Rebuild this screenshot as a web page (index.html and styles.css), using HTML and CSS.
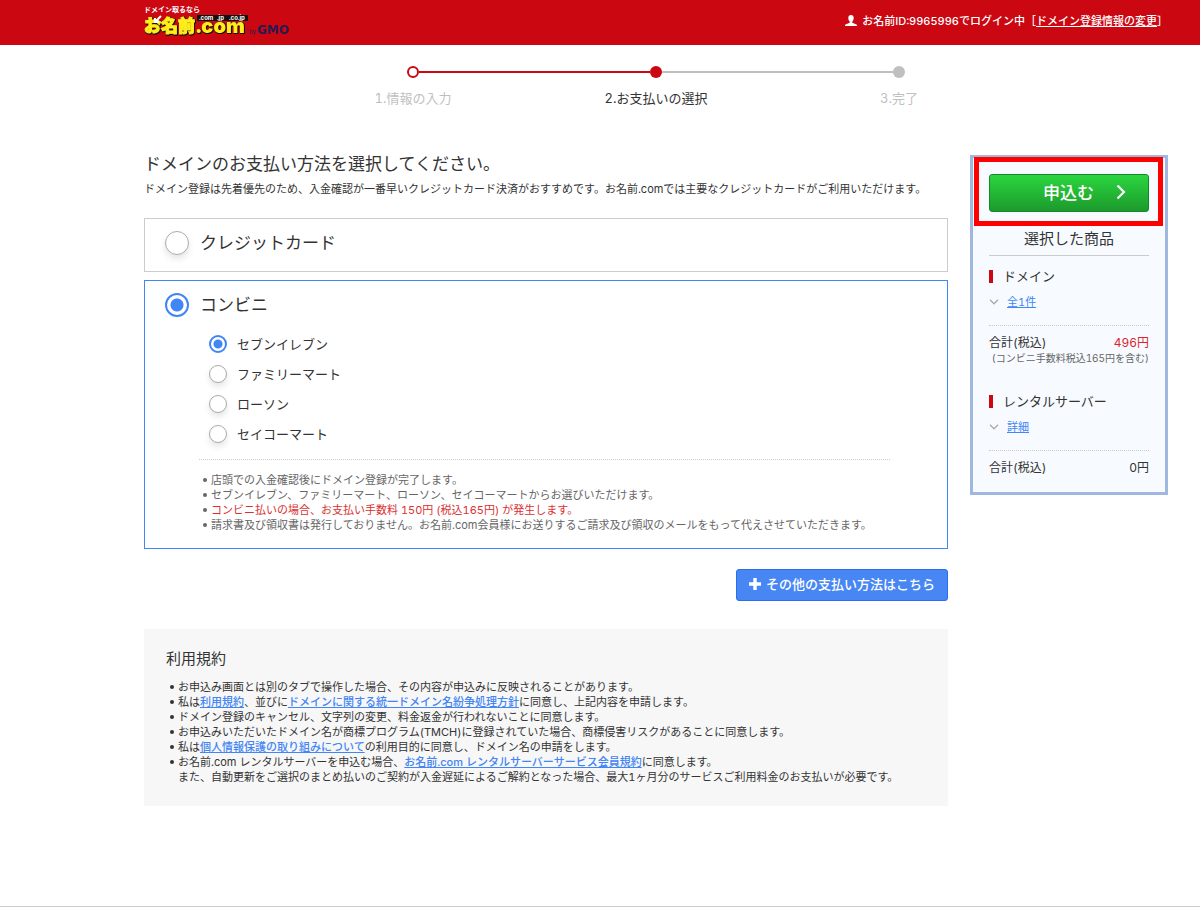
FILE: index.html
```html
<!DOCTYPE html>
<html lang="ja">
<head>
<meta charset="utf-8">
<meta name="viewport" content="width=device-width, initial-scale=1">
<title>お支払いの選択 | お名前.com</title>
<link rel="stylesheet" href="styles.css">
</head>
<body>
<header class="site-header">
  <svg class="logo" width="150" height="32" viewBox="0 0 150 32" role="img" aria-label="お名前.com by GMO">
    <text class="logo-tag" x="0" y="7">ドメイン取るなら</text>
    <rect x="53" y="10" width="51" height="6" fill="#111"/>
    <text class="logo-tld" x="55" y="15">.com</text>
    <text class="logo-tld" x="73" y="15">.jp</text>
    <text class="logo-tld" x="85" y="15">.co.jp</text>
    <text class="logo-name" x="0" y="27">お名前</text>
    <text class="logo-com" x="52" y="28">.com</text>
    <path d="M17 11l-5 5M11 13v4h4" fill="none" stroke="#fff" stroke-width="2"/>
    <text class="logo-by" x="105" y="29">by</text>
    <text class="logo-gmo" x="113" y="29">GMO</text>
  </svg>
  <p class="account">
    <svg width="12" height="12" viewBox="0 0 12 12" aria-hidden="true"><path d="M6 0C4.200 0 3.300 1.300 3.300 3.100c0 1.400.5 2.700 1.400 3.400v1.300L1 9.300C.4 9.600 0 10 0 11h12c0-1-.4-1.400-1-1.700L7.300 7.800V6.500c.9-.7 1.400-2 1.400-3.400C8.700 1.300 7.800 0 6 0z" fill="#fff"/></svg>
    <span>お名前ID:9965996でログイン中［<a href="#">ドメイン登録情報の変更</a>］</span>
  </p>
</header>

<div class="page">
  <ol class="steps">
    <li class="step step-done"><span class="mark"><span class="dot"></span></span>1.情報の入力</li>
    <li class="step step-current" aria-current="step"><span class="mark"><span class="dot"></span></span>2.お支払いの選択</li>
    <li class="step"><span class="mark"><span class="dot"></span></span>3.完了</li>
  </ol>

  <div class="columns">
    <main class="main">
      <h1 class="title">ドメインのお支払い方法を選択してください。</h1>
      <p class="intro">ドメイン登録は先着優先のため、入金確認が一番早いクレジットカード決済がおすすめです。お名前.comでは主要なクレジットカードがご利用いただけます。</p>

      <section class="card">
        <label class="method"><input class="radio radio-large" type="radio" name="method">クレジットカード</label>
      </section>

      <section class="card card-selected">
        <label class="method"><input class="radio radio-large" type="radio" name="method" checked>コンビニ</label>
        <div class="stores">
          <label class="store"><input class="radio" type="radio" name="store" checked>セブンイレブン</label>
          <label class="store"><input class="radio" type="radio" name="store">ファミリーマート</label>
          <label class="store"><input class="radio" type="radio" name="store">ローソン</label>
          <label class="store"><input class="radio" type="radio" name="store">セイコーマート</label>
        </div>
        <ul class="list notes">
          <li>店頭での入金確認後にドメイン登録が完了します。</li>
          <li>セブンイレブン、ファミリーマート、ローソン、セイコーマートからお選びいただけます。</li>
          <li><span class="alert">コンビニ払いの場合、お支払い手数料 150円 (税込165円) が発生します。</span></li>
          <li>請求書及び領収書は発行しておりません。お名前.com会員様にお送りするご請求及び領収のメールをもって代えさせていただきます。</li>
        </ul>
      </section>

      <div class="more">
        <button class="more-button" type="button">
          <svg width="12" height="12" viewBox="0 0 12 12" aria-hidden="true"><path d="M4.300 0h3.400v4.300H12v3.400H7.700V12H4.300V7.700H0V4.300h4.300z" fill="#fff"/></svg>
          その他の支払い方法はこちら
        </button>
      </div>

      <section class="terms">
        <h2 class="terms-title">利用規約</h2>
        <ul class="list">
          <li>お申込み画面とは別のタブで操作した場合、その内容が申込みに反映されることがあります。</li>
          <li>私は<a href="#">利用規約</a>、並びに<a href="#">ドメインに関する統一ドメイン名紛争処理方針</a>に同意し、上記内容を申請します。</li>
          <li>ドメイン登録のキャンセル、文字列の変更、料金返金が行われないことに同意します。</li>
          <li>お申込みいただいたドメイン名が商標プログラム(TMCH)に登録されていた場合、商標侵害リスクがあることに同意します。</li>
          <li>私は<a href="#">個人情報保護の取り組みについて</a>の利用目的に同意し、ドメイン名の申請をします。</li>
          <li>お名前.com レンタルサーバーを申込む場合、<a href="#">お名前.com レンタルサーバーサービス会員規約</a>に同意します。<br>また、自動更新をご選択のまとめ払いのご契約が入金遅延によるご解約となった場合、最大1ヶ月分のサービスご利用料金のお支払いが必要です。</li>
        </ul>
      </section>
    </main>

    <aside class="summary">
      <button class="apply" type="submit">
        申込む
        <svg width="10" height="16" viewBox="0 0 10 16" aria-hidden="true"><path d="M1.500 1.500L8 8l-6.500 6.500" fill="none" stroke="#fff" stroke-width="2.200"/></svg>
      </button>
      <div class="highlight"></div>
      <h2 class="summary-title">選択した商品</h2>

      <section class="product">
        <h3 class="product-name">ドメイン</h3>
        <p class="detail">
          <svg width="10" height="6" viewBox="0 0 10 6" aria-hidden="true"><path d="M1 .8l4 4 4-4" fill="none" stroke="#aaa" stroke-width="1.300"/></svg>
          <a href="#">全1件</a>
        </p>
        <div class="total"><span>合計(税込)</span><span class="price">496円</span></div>
        <p class="fee">(コンビニ手数料税込165円を含む)</p>
      </section>

      <section class="product product-next">
        <h3 class="product-name">レンタルサーバー</h3>
        <p class="detail">
          <svg width="10" height="6" viewBox="0 0 10 6" aria-hidden="true"><path d="M1 .8l4 4 4-4" fill="none" stroke="#aaa" stroke-width="1.300"/></svg>
          <a href="#">詳細</a>
        </p>
        <div class="total"><span>合計(税込)</span><span>0円</span></div>
      </section>
    </aside>
  </div>
</div>
<footer class="site-footer"></footer>
</body>
</html>
```
FILE: styles.css
```css
* { box-sizing: border-box; }

body, h1, h2, h3, p, ul, ol { margin: 0; padding: 0; }

body {
  background: #fff;
  color: #333;
  font-family: Inter, "Noto Sans CJK JP", sans-serif;
  font-size: 11px;
  font-variant-numeric: tabular-nums;
  line-height: 16px;
}

h1, h2, h3 { font-weight: 400; }
ul, ol { list-style: none; }
a { color: #4285f4; }
button { font-family: inherit; cursor: pointer; }
svg { flex: none; }

/* Header */
.site-header {
  display: flex;
  justify-content: space-between;
  align-items: flex-start;
  padding: 5px 32px 8px 144px;
  background: #cb0712;
}

.logo { display: block; overflow: visible; }
.logo-tag { font-size: 7px; font-weight: 700; fill: #fff; }
.logo-tld { font-size: 6px; font-weight: 700; fill: #fff; }
.logo-name,
.logo-com {
  fill: #ffee1c;
  font-weight: 900;
  filter: drop-shadow(1px 0 0 #1a1208) drop-shadow(0 1px 0 #1a1208);
}
.logo-name { font-size: 17px; stroke: #ffee1c; stroke-width: 1px; }
.logo-com { font-size: 20px; }
.logo-by { font-size: 6px; fill: #2c1a50; }
.logo-gmo { font-family: "DejaVu Sans", sans-serif; font-size: 12px; font-weight: 700; fill: #2c1a50; }

.account {
  display: flex;
  align-items: center;
  gap: 5px;
  margin-top: 8px;
  color: #fff;
  font-weight: 500;
}
.account a { color: #fff; }

.page { padding: 0 32px 0 144px; }

/* Progress */
.steps {
  display: grid;
  grid-template-columns: repeat(3, 1fr);
  max-width: 729px;
  margin: 21px auto 0;
}
.step {
  color: #bfbfbf;
  font-size: 13px;
  line-height: 20px;
  text-align: center;
}
.mark { display: flex; align-items: center; margin-bottom: 10px; }
.mark::before,
.mark::after { content: ""; flex: 1; height: 2px; background: #bfbfbf; }
.step:first-child .mark::before,
.step:last-child .mark::after { background: none; }
.dot { width: 12px; height: 12px; border-radius: 50%; background: #bfbfbf; }
.step-done .mark::after,
.step-current .mark::before,
.step-current .dot { background: #cb0712; }
.step-done .dot { background: #fff; border: 2px solid #cb0712; }
.step-current { color: #333; }

.columns {
  display: flex;
  align-items: flex-start;
  gap: 22px;
  margin-top: 44px;
}

/* Payment methods */
.main { flex: 1; min-width: 0; }
.title { font-size: 17px; line-height: 24px; }
.intro { margin: 5px 0 21px; }

.card { border: 1px solid #ccc; padding: 12px 20px 16px; }
.card + .card { margin-top: 8px; }
.card-selected { border-color: #4285f4; padding-bottom: 15px; }

.method {
  display: flex;
  align-items: center;
  gap: 11px;
  font-size: 17px;
  line-height: 24px;
}
.radio {
  appearance: none;
  flex: none;
  width: 18px;
  height: 18px;
  margin: 0;
  border: 1px solid #aaa;
  border-radius: 50%;
  background: #fff;
  box-shadow: 0 4px 6px rgba(0, 0, 0, 0.1);
}
.radio-large { width: 24px; height: 24px; }
.radio:checked {
  border: 2px solid #4285f4;
  background: radial-gradient(circle, #4285f4 4px, #fff 5px);
  box-shadow: none;
}
.radio-large:checked { background: radial-gradient(circle, #4285f4 6px, #fff 7px); }

.stores { margin-top: 12px; padding-left: 44px; }
.store {
  display: flex;
  align-items: center;
  gap: 10px;
  font-size: 13px;
  line-height: 30px;
}

.list { line-height: 15px; }
.list li { position: relative; padding-left: 12px; }
.list li::before {
  content: "";
  position: absolute;
  left: 4px;
  top: 5px;
  width: 4px;
  height: 4px;
  border-radius: 50%;
  background: currentColor;
}
.notes {
  margin: 10px 37px 0 34px;
  padding-top: 13px;
  border-top: 1px dotted #ccc;
  color: #666;
}
.alert { color: #dc3030; }

.more { display: flex; justify-content: flex-end; margin-top: 20px; }
.more-button {
  display: flex;
  align-items: center;
  gap: 5px;
  height: 32px;
  padding: 0 12px 3px;
  border: 1px solid #2a6df0;
  border-radius: 3px;
  background: #4887f3;
  color: #fff;
  font-size: 13px;
  font-weight: 500;
}

.terms { margin-top: 28px; padding: 20px 22px 21px; background: #f7f7f7; }
.terms-title { margin-bottom: 11px; font-size: 15px; line-height: 20px; }
.terms a { font-weight: 500; }

/* Order summary */
.summary {
  position: relative;
  flex: none;
  width: 198px;
  margin-top: 3px;
  padding: 16px 16px 16px;
  border: 3px solid #a0b8e0;
  background: #f7fbff;
}
.highlight {
  position: absolute;
  top: -1px;
  left: 1px;
  right: 2px;
  height: 69px;
  border: 5px solid #fe0000;
  pointer-events: none;
}
.apply {
  display: flex;
  align-items: center;
  justify-content: flex-end;
  gap: 22px;
  width: 100%;
  height: 38px;
  padding: 0 22px 3px;
  border: 1px solid #15892a;
  border-radius: 3px;
  background: linear-gradient(#2bd63f, #1c9a2c);
  color: #fff;
  font-size: 17px;
  font-weight: 500;
}
.summary-title {
  margin-top: 16px;
  padding-bottom: 5px;
  border-bottom: 1px solid #ccc;
  font-size: 15px;
  line-height: 22px;
  text-align: center;
}
.product { padding-top: 10px; }
.product-next { padding-top: 25px; }
.product-name {
  display: flex;
  align-items: center;
  gap: 10px;
  font-size: 13px;
  line-height: 20px;
}
.product-name::before { content: ""; width: 4px; height: 13px; background: #cb0712; }
.detail { display: flex; align-items: center; gap: 8px; margin: 8px 0 15px; }
.total {
  display: flex;
  justify-content: space-between;
  padding-top: 9px;
  border-top: 1px dotted #ccc;
  font-size: 12px;
}
.price { color: #dc2430; }
.fee { color: #666; font-size: 10px; line-height: 15px; text-align: right; white-space: nowrap; }

.site-footer { height: 18px; margin-top: 100px; border-top: 1px solid #ccc; }
```
